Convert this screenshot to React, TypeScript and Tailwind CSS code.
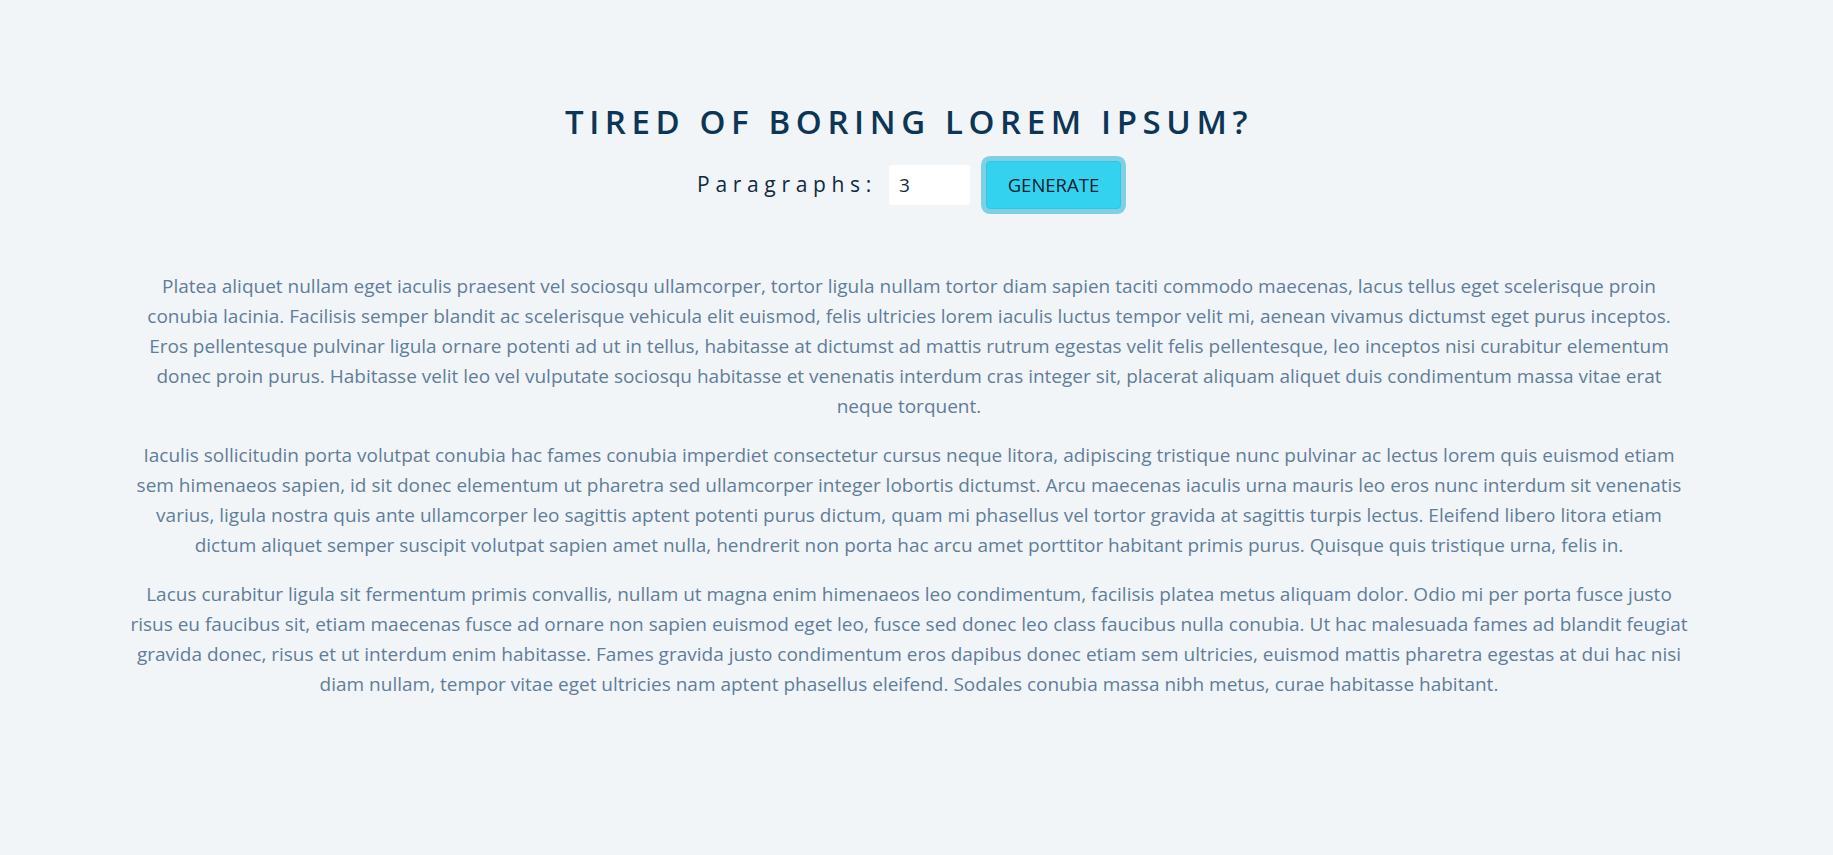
import { useState } from "react";

const paragraphs = [
  "Platea aliquet nullam eget iaculis praesent vel sociosqu ullamcorper, tortor ligula nullam tortor diam sapien taciti commodo maecenas, lacus tellus eget scelerisque proin conubia lacinia. Facilisis semper blandit ac scelerisque vehicula elit euismod, felis ultricies lorem iaculis luctus tempor velit mi, aenean vivamus dictumst eget purus inceptos. Eros pellentesque pulvinar ligula ornare potenti ad ut in tellus, habitasse at dictumst ad mattis rutrum egestas velit felis pellentesque, leo inceptos nisi curabitur elementum donec proin purus. Habitasse velit leo vel vulputate sociosqu habitasse et venenatis interdum cras integer sit, placerat aliquam aliquet duis condimentum massa vitae erat neque torquent.",
  "Iaculis sollicitudin porta volutpat conubia hac fames conubia imperdiet consectetur cursus neque litora, adipiscing tristique nunc pulvinar ac lectus lorem quis euismod etiam sem himenaeos sapien, id sit donec elementum ut pharetra sed ullamcorper integer lobortis dictumst. Arcu maecenas iaculis urna mauris leo eros nunc interdum sit venenatis varius, ligula nostra quis ante ullamcorper leo sagittis aptent potenti purus dictum, quam mi phasellus vel tortor gravida at sagittis turpis lectus. Eleifend libero litora etiam dictum aliquet semper suscipit volutpat sapien amet nulla, hendrerit non porta hac arcu amet porttitor habitant primis purus. Quisque quis tristique urna, felis in.",
  "Lacus curabitur ligula sit fermentum primis convallis, nullam ut magna enim himenaeos leo condimentum, facilisis platea metus aliquam dolor. Odio mi per porta fusce justo risus eu faucibus sit, etiam maecenas fusce ad ornare non sapien euismod eget leo, fusce sed donec leo class faucibus nulla conubia. Ut hac malesuada fames ad blandit feugiat gravida donec, risus et ut interdum enim habitasse. Fames gravida justo condimentum eros dapibus donec etiam sem ultricies, euismod mattis pharetra egestas at dui hac nisi diam nullam, tempor vitae eget ultricies nam aptent phasellus eleifend. Sodales conubia massa nibh metus, curae habitasse habitant.",
];

export default function App() {
  const [count, setCount] = useState("3");

  return (
    <div className="min-h-screen pr-[15px] bg-[#f1f5f8] font-['Segoe_UI','Open_Sans',sans-serif]">
      <section className="mx-auto w-[86%] pt-[100px]">
        <h3 className="text-center text-[33px] leading-[44px] uppercase tracking-[0.17em] font-semibold text-[#0c3556]">
          Tired of boring lorem ipsum?
        </h3>

        {/* form */}
        <form
          className="flex items-center justify-center mt-[17px]"
          onSubmit={(e) => e.preventDefault()}
        >
          <label
            htmlFor="amount"
            className="text-[21px] tracking-[0.27em] text-[#102a42] mr-[12px]"
          >
            Paragraphs:
          </label>
          <input
            id="amount"
            type="number"
            value={count}
            onChange={(e) => setCount(e.target.value)}
            className="w-[81px] h-[40px] bg-white rounded-[3px] px-[10px] text-[19px] text-[#102a42] outline-none"
          />
          <button
            type="submit"
            className="ml-[16px] h-[48px] w-[135px] bg-[#33d3f0] text-[18.5px] text-[#0b1d2e] rounded-[4px] border border-[#2ec6e4] ring-[5px] ring-[#7fd0e3]"
          >
            GENERATE
          </button>
        </form>

        <article className="mt-[62px] text-center text-[19px] leading-[30px] text-[#617d98]">
          {paragraphs.map((p, i) => (
            <p key={i} className="mb-[19px]">
              {p}
            </p>
          ))}
        </article>
      </section>
    </div>
  );
}
